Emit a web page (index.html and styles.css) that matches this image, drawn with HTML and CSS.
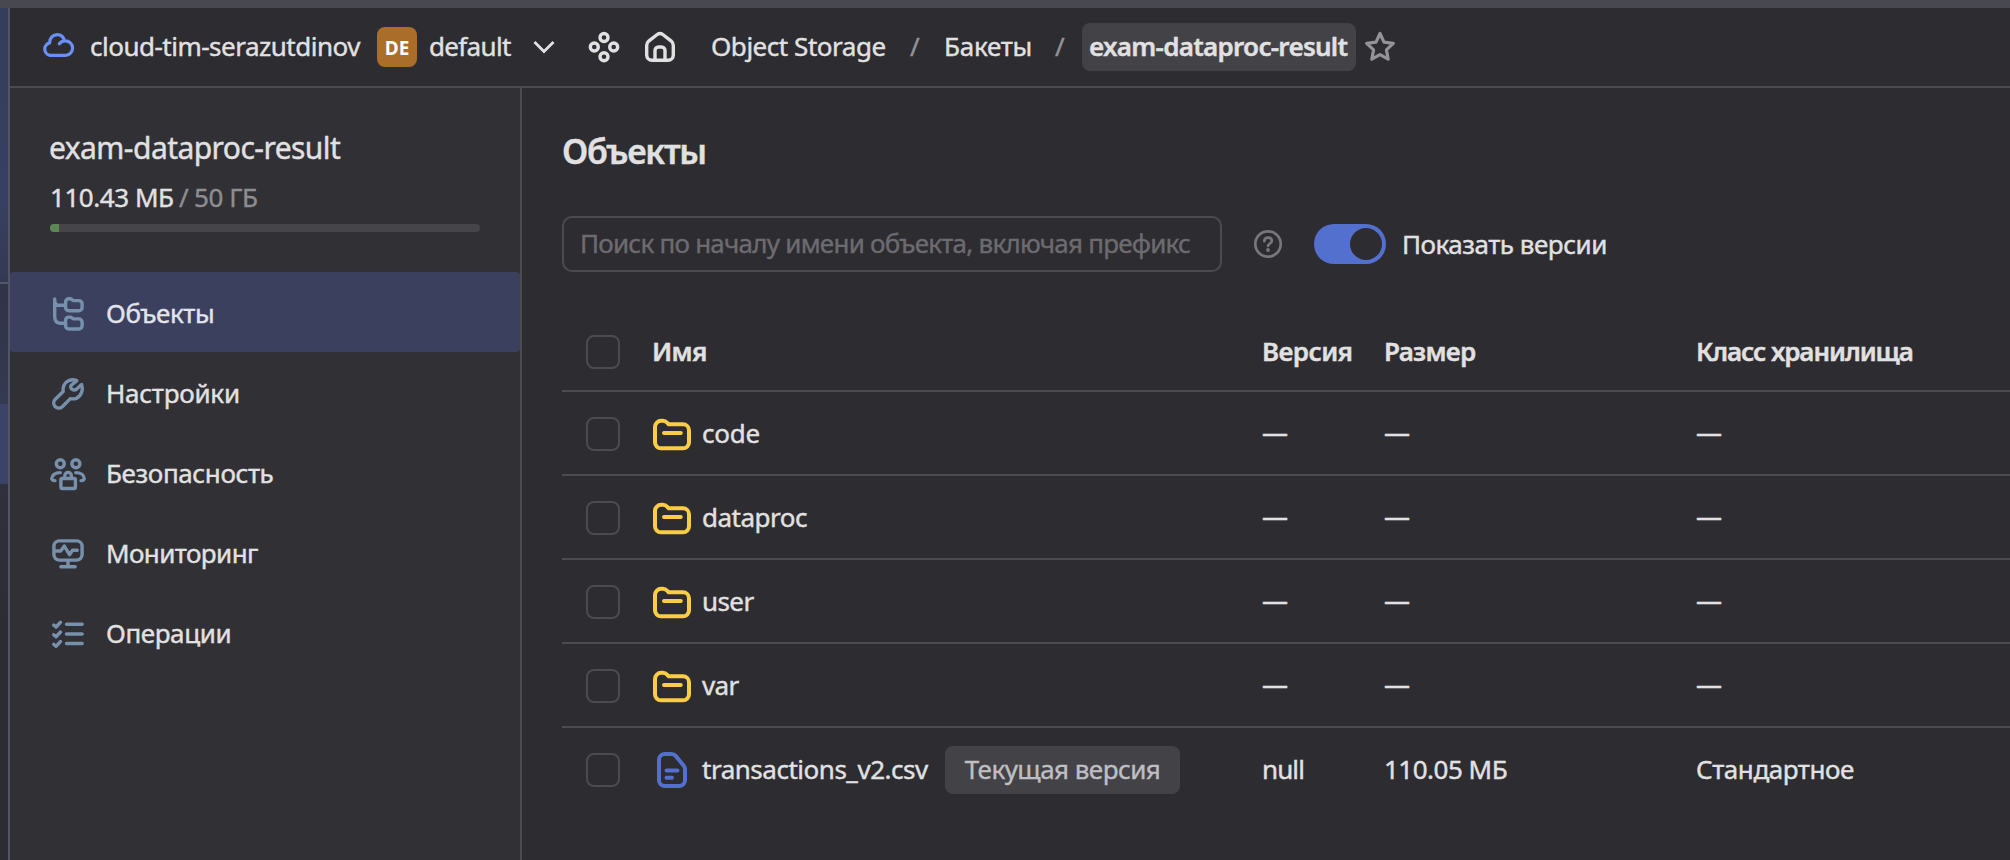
FILE: index.html
```html
<!DOCTYPE html>
<html lang="ru">
<head>
<meta charset="utf-8">
<title>exam-dataproc-result</title>
<link rel="stylesheet" href="styles.css">
</head>
<body>
<svg class="defs" aria-hidden="true">
  <symbol id="folder" viewBox="0 0 38 33"><path d="M2 9a6.300 6.300 0 0 1 6.300-6.300h1.500c2 0 3.300.8 4.300 2l1.600 1.600H30a6 6 0 0 1 6 6V24.300a6 6 0 0 1-6 6H8a6 6 0 0 1-6-6zM11 15h9.500h7.300"/></symbol>
</svg>
<div class="window">
  <aside class="rail"><div class="rail-top"></div><div class="rail-mid"></div><div class="rail-active"></div><div class="rail-rest"></div></aside>
  <div class="page">
    <header class="header">
      <svg class="cloud" width="32" height="26" viewBox="0 0 32 26"><path d="M17.300 10.700C19 8.600 21 7.900 23.200 7.900A7.200 7.200 0 0 1 23.500 22.400H8A6.400 6.400 0 0 1 7.600 9.900C7.600 5 11 1.600 15.300 1.600C18.700 1.600 21.500 4 22.400 7.500"/></svg>
      <span class="cloud-name">cloud-tim-serazutdinov</span>
      <span class="badge">DE</span>
      <span class="folder-name">default</span>
      <svg class="chevron" width="24" height="14" viewBox="0 0 24 14"><path d="M2.500 2L12 11.500L21.500 2"/></svg>
      <svg class="services" width="32" height="32" viewBox="0 0 32 32"><circle cx="16" cy="6.500" r="4"/><circle cx="6.300" cy="16" r="4"/><circle cx="25.700" cy="16" r="4"/><circle cx="16" cy="25.700" r="4"/></svg>
      <svg class="home" width="32" height="32" viewBox="0 0 32 32"><path d="M2.700 14.500c0-2 .8-3.400 2.300-4.700L13.200 3.500c1.800-1.400 3.800-1.400 5.600 0L27 9.800c1.500 1.300 2.300 2.700 2.300 4.700V24a5.300 5.300 0 0 1-5.300 5.300H8A5.300 5.300 0 0 1 2.700 24zM11 29V19.500a3.500 3.500 0 0 1 3.500-3.500h3a3.500 3.500 0 0 1 3.500 3.500V29"/></svg>
      <nav class="crumbs">
        <span class="crumb-service">Object Storage</span><span class="slash">/</span>
        <span class="crumb-buckets">Бакеты</span><span class="slash">/</span>
        <span class="crumb-current">exam-dataproc-result</span>
      </nav>
      <svg class="star" width="32" height="32" viewBox="0 0 32 32"><path d="M16 2.500l4 8.700 9.300 1.200-6.900 6.400 1.800 9.400-8.200-4.600-8.200 4.600 1.800-9.400-6.900-6.400 9.300-1.200z"/></svg>
    </header>
    <div class="body">
      <aside class="sidebar">
        <div class="bucket">
          <div class="bucket-name">exam-dataproc-result</div>
          <div class="usage"><span class="used">110.43 МБ</span><span class="sep">/</span><span class="quota">50 ГБ</span></div>
          <div class="meter"><div class="meter-fill"></div></div>
        </div>
        <nav class="menu">
          <a class="item active"><svg viewBox="0 0 36 36"><path d="M4.700 3V20.500C4.700 25.500 7 27.300 11 27.300H15.500M4.700 4.500C4.700 8 6 9.300 9 9.300H15.500M15.600 6a3.200 3.200 0 0 1 3.200-3.200h1.500c1.500 0 2 1.800 3.500 1.800h5a3.300 3.300 0 0 1 3.300 3.300v3.500a3.300 3.300 0 0 1-3.300 3.300h-10a3.200 3.200 0 0 1-3.200-3.200zM15.600 24.300a3.200 3.200 0 0 1 3.200-3.200h1.500c1.500 0 2 1.800 3.500 1.800h5a3.300 3.300 0 0 1 3.300 3.300v3.500a3.300 3.300 0 0 1-3.300 3.300h-10a3.200 3.200 0 0 1-3.200-3.200z"/></svg><span class="t-objects">Объекты</span></a>
          <a class="item"><svg viewBox="0 0 36 36"><path d="M26.800 4.600C20 2 12 6.500 13.200 15.500L5.300 23.300a4.900 4.900 0 0 0 7 7.400L20.300 22.600C28 24.300 34.200 17.500 31.600 8.600L26.500 13.200C23.500 15.500 19 12 21.300 9.200Z"/></svg><span class="t-settings">Настройки</span></a>
          <a class="item"><svg viewBox="0 0 36 36"><circle cx="10.300" cy="7.700" r="4"/><circle cx="25.900" cy="7.700" r="4"/><path d="M10.300 16.600C5 16.600 1.800 19.300 1.800 22.600c0 1.500 1.200 2 3.200 2M25.700 16.600c5.300 0 8.500 2.700 8.500 6 0 1.500-1.200 2-3.200 2"/><rect x="10.900" y="22.500" width="14.500" height="10" rx="1.500"/><path d="M14.800 22v-2.300a3.300 3.300 0 0 1 6.600 0V22"/></svg><span class="t-security">Безопасность</span></a>
          <a class="item"><svg viewBox="0 0 36 36"><rect x="3.900" y="4.900" width="28.200" height="19.200" rx="5.500"/><path d="M5 15H10.700L14.300 10L19.500 18.700L22.500 14.300H27.300M18 25V30.700M10.800 30.800H25.200"/></svg><span class="t-monitoring">Мониторинг</span></a>
          <a class="item"><svg viewBox="0 0 36 36"><path d="M16.500 8.300H32.200M16.500 18H32.200M16.500 27.500H32.200M3.700 9L6 11L10.500 6.300M3.700 18.700L6 20.700L10.500 16M3.700 28.300L6 30.300L10.500 25.500"/></svg><span class="t-operations">Операции</span></a>
        </nav>
      </aside>
      <main class="main">
        <h1 class="title">Объекты</h1>
        <div class="filters">
          <div class="search">Поиск по началу имени объекта, включая префикс</div>
          <svg class="help" width="28" height="28" viewBox="0 0 28 28"><circle cx="14" cy="14" r="12.700"/><path d="M10.300 11.200C10.500 8.700 12 7.700 14 7.700C16.200 7.700 17.800 9 17.800 11C17.800 13.700 14 13.500 14 16"/><circle class="dot" cx="14" cy="20" r="1.900"/></svg>
          <div class="toggle"><div class="knob"></div></div>
          <span class="toggle-label">Показать версии</span>
        </div>
        <div class="table">
          <div class="row head"><i class="check"></i><span class="h-name">Имя</span><span class="h-version">Версия</span><span class="h-size">Размер</span><span class="h-class">Класс хранилища</span></div>
          <div class="row"><i class="check"></i><div class="name"><svg class="folder"><use href="#folder"/></svg><span class="n-code">code</span></div><span class="dash">—</span><span class="dash">—</span><span class="dash">—</span></div>
          <div class="row"><i class="check"></i><div class="name"><svg class="folder"><use href="#folder"/></svg><span class="n-dataproc">dataproc</span></div><span class="dash">—</span><span class="dash">—</span><span class="dash">—</span></div>
          <div class="row"><i class="check"></i><div class="name"><svg class="folder"><use href="#folder"/></svg><span class="n-user">user</span></div><span class="dash">—</span><span class="dash">—</span><span class="dash">—</span></div>
          <div class="row"><i class="check"></i><div class="name"><svg class="folder"><use href="#folder"/></svg><span class="n-var">var</span></div><span class="dash">—</span><span class="dash">—</span><span class="dash">—</span></div>
          <div class="row"><i class="check"></i><div class="name"><svg class="file" viewBox="0 0 38 36"><path d="M6 8a6 6 0 0 1 6-6h6.300a6 6 0 0 1 4.600 2.100l7.200 8.800a7 7 0 0 1 1.900 4V28a6 6 0 0 1-6 6H12a6 6 0 0 1-6-6zM13.500 18.400H24.500M13.500 25.800H19"/></svg><span class="n-csv">transactions_v2.csv</span><span class="tag">Текущая версия</span></div><span class="v-null">null</span><span class="v-size">110.05 МБ</span><span class="v-class">Стандартное</span></div>
        </div>
      </main>
    </div>
  </div>
</div>
</body>
</html>
```
FILE: styles.css
```css
* { box-sizing: border-box; }

body {
  margin: 0;
  width: 2010px;
  height: 860px;
  overflow: hidden;
  background: #2d2c31;
  color: #e2e1e2;
  font: 400 26px/36px "Noto Sans", sans-serif;
  white-space: nowrap;
  -webkit-text-stroke: .4px;
}

.defs { display: none; }
svg { display: block; flex: none; fill: none; stroke: currentColor; stroke-width: 3.4; stroke-linecap: round; stroke-linejoin: round; overflow: visible; }

.window { display: flex; height: 860px; border-top: 8px solid #474850; }

.rail { display: flex; flex-direction: column; flex: none; width: 10px; border-right: 2px solid #535567; }
.rail-top { height: 274px; background: linear-gradient(#353d5c, #384061 70%, #343953); }
.rail-mid { height: 122px; border-top: 2px solid #53566a; background: linear-gradient(#313347, #343a52); }
.rail-active { height: 80px; background: #3b4468; }
.rail-rest { flex: 1; background: linear-gradient(#30313e, #2d2c32 40%); }

.page { flex: 1; min-width: 0; display: flex; flex-direction: column; }

/* header */
.header { display: flex; align-items: center; height: 80px; padding-left: 32px; border-bottom: 2px solid #4c4b50; }
.header > span, .crumbs > span { position: relative; top: -1px; }
.cloud { color: #6a8ff5; margin-top: -2px; margin-left: -.5px; margin-right: .5px; stroke-width: 3.2; }
.cloud-name { width: 287px; padding-left: 16px; letter-spacing: -.5px; }
.header > .badge { top: 0; width: 40px; height: 40px; margin: 0 12px 0 16px; border-radius: 8px; background: #ab6d2a; color: #fff; font-size: 19px; font-weight: 700; line-height: 42px; text-align: center; -webkit-text-stroke: 0; }
.folder-name { width: 103px; letter-spacing: -.66px; }
.chevron { stroke-width: 2.8; stroke-linecap: butt; stroke-linejoin: miter; margin-right: 32px; }
.services { margin-right: 24px; }
.home { margin-right: 35px; }
.crumbs { display: flex; align-items: center; }
.crumb-service { width: 199px; letter-spacing: -.46px; }
.slash { width: 34px; color: #949396; }
.crumb-buckets { width: 111px; letter-spacing: -.27px; }
.crumbs > .crumb-current { top: 0; width: 274px; height: 48px; padding-left: 7px; margin-left: -7px; border-radius: 8px; background: #434247; font-weight: 600; line-height: 46px; letter-spacing: -.72px; }
.star { margin-left: 8px; color: #949396; stroke-width: 3.2; }

/* sidebar */
.body { flex: 1; display: flex; min-height: 0; }
.sidebar { flex: none; width: 512px; border-right: 2px solid #4c4b50; background: #313035; }
.bucket { height: 184px; padding: 40px 40px 0; }
.bucket-name { margin-left: -1px; font-size: 30px; line-height: 40px; letter-spacing: -.55px; }
.usage { display: flex; padding-top: 11px; height: 56px; color: #8e8d90; letter-spacing: -.45px; }
.used { width: 129px; color: #e2e1e2; }
.sep { width: 15px; }
.meter { height: 8px; width: 430px; overflow: hidden; border-radius: 4px; background: #46454a; }
.meter-fill { width: 9px; height: 8px; background: #5f8755; }
.item { display: flex; align-items: center; height: 80px; padding: 3px 0 0 40px; gap: 20px; }
.item svg { width: 36px; height: 36px; color: #7790ab; }
.item span { margin-top: -2px; }
.active { background: #3b405e; border-radius: 4px; color: #e2e4ec; }
.t-objects { letter-spacing: -.41px; }
.t-settings { letter-spacing: -.25px; }
.t-security { letter-spacing: -.38px; }
.t-monitoring { letter-spacing: -.59px; }
.t-operations { letter-spacing: -.4px; }

/* content */
.main { flex: 1; min-width: 0; padding: 42px 0 0 40px; }
.title { margin: 0; height: 86px; font-size: 34px; font-weight: 600; line-height: 43px; letter-spacing: -1.27px; }
.filters { display: flex; align-items: center; height: 56px; }
.search { width: 660px; height: 56px; padding-left: 16px; border: 2px solid #4c4b50; border-radius: 10px; color: #6c6b6f; line-height: 50px; letter-spacing: -.76px; }
.help { margin: 0 32px; color: #77767a; stroke-width: 2.7; }
.help .dot { fill: currentColor; stroke: none; }
.toggle { display: flex; justify-content: flex-end; width: 72px; height: 40px; padding: 4px; border-radius: 20px; background: #5370cf; }
.knob { width: 32px; height: 32px; border-radius: 50%; background: #2d2c31; }
.toggle-label { padding-left: 16px; letter-spacing: -.48px; }

.table { margin-top: 40px; }
.row { display: grid; grid-template-columns: 90px 610px 122px 312px 1fr; align-items: center; height: 84px; padding-top: 2px; border-top: 2px solid #4c4b50; }
.row > span, .name > span { position: relative; top: -1px; }
.row > .dash { top: -2px; }
.head { height: 78px; border-top: 0; }
.head > span { font-weight: 600; }
.check { width: 34px; height: 34px; margin-left: 24px; border: 2px solid #4c4b50; border-radius: 8px; }
.name { display: flex; align-items: center; padding-left: 1px; }
.folder { width: 38px; height: 33px; margin-right: 11px; color: #fbcd45; stroke-width: 4; }
.file { width: 38px; height: 36px; margin-right: 11px; color: #5370cf; stroke-width: 4; }
.name > .tag { top: 0; width: 235px; height: 48px; margin-left: 16px; border-radius: 8px; background: #434247; color: #bfbec0; text-align: center; line-height: 46px; letter-spacing: -.54px; }
.h-name { letter-spacing: -.66px; }
.h-version { letter-spacing: -.6px; }
.h-size { letter-spacing: -.71px; }
.h-class { letter-spacing: -1.08px; }
.n-code { letter-spacing: -.2px; }
.n-dataproc { letter-spacing: -.5px; }
.n-user, .n-var { letter-spacing: -.6px; }
.n-csv { width: 227px; letter-spacing: -.48px; }
.v-null { letter-spacing: -.9px; }
.v-size { letter-spacing: -.5px; }
.v-class { letter-spacing: -.44px; }
```
